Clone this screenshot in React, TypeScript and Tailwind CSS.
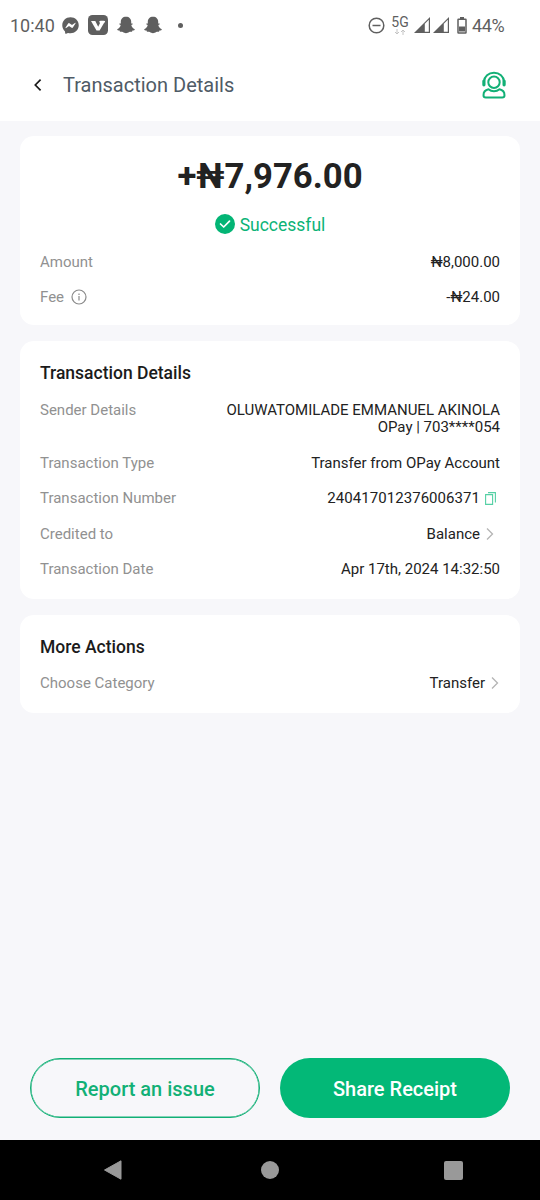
import React from "react";
import { FaFacebookMessenger } from "react-icons/fa";

function Ghost({ className }: { className: string }) {
  return (
    <svg className={className} viewBox="0 0 18 18" fill="currentColor">
      <path d="M9 .8c3.200 0 5.200 2.100 5.200 5v1.700c.6 0 1.300-.2 1.500.3.200.6-.6.900-1.400 1.300.5 2 1.500 3.500 3.500 4.100.2.800-.9 1.200-2.300 1.400-.3.500-.2 1-.6 1.100-.8 0-1.800-.2-2.700.3-1 .7-1.900 1.200-3.200 1.200s-2.200-.5-3.200-1.200c-.9-.5-1.900-.3-2.700-.3-.4-.1-.3-.6-.6-1.100C1.100 14.400 0 14 .2 13.200c2-.6 3-2.100 3.500-4.100-.8-.4-1.600-.7-1.400-1.300.2-.5.9-.3 1.500-.3V5.800c0-2.900 2-5 5.200-5z" />
    </svg>
  );
}

function Signal({ className }: { className: string }) {
  return (
    <svg className={className} viewBox="0 0 16 16">
      <path d="M16 0v16H0z" fill="currentColor" />
      <path d="M10.800 6.800 14.800 2.800v12h-4z" fill="white" />
    </svg>
  );
}

function StatusBar() {
  return (
    <div className="flex h-[50px] shrink-0 items-center justify-between pt-[2px] pr-[35px] pl-[10px] text-[#5f5f5f]">
      <div className="flex items-center">
        <span className="w-[44px] text-[18px] leading-[22px] whitespace-nowrap">10:40</span>
        <FaFacebookMessenger className="relative -top-[1px] ml-[8px] size-[17px]" />
        <svg className="relative -top-[1px] ml-[9px] h-[20px] w-[20px]" viewBox="0 0 20 20">
          <rect width="20" height="20" rx="4.500" fill="currentColor" />
          <path d="M3 6h4.300l2.900 5.800L13 6h4.200l-5.600 9.500H8.500z" fill="white" />
          <path d="M11.200 6.200c1.800-.6 3.500-.4 5.800-.2l-1 2.200c-1.200-.8-2.400-.3-3.800.8z" fill="white" />
        </svg>
        <Ghost className="relative -top-[1px] ml-[9px] size-[18px]" />
        <Ghost className="relative -top-[1px] ml-[9px] size-[18px]" />
        <span className="relative -top-[1px] ml-[16px] size-[5px] rounded-full bg-[#5f5f5f]" />
      </div>
      <div className="flex items-center">
        <svg className="relative -top-[1px] size-[17px]" viewBox="0 0 17 17" fill="none" stroke="currentColor" strokeWidth="1.500">
          <circle cx="8.500" cy="8.500" r="7.300" />
          <path d="M4.500 8.500h8" />
        </svg>
        <div className="ml-[6px] flex h-[21px] w-[18px] flex-col items-center">
          <span className="text-[14px] leading-[13px]">5G</span>
          <svg className="h-[6px] w-[12px]" viewBox="0 0 12 6" fill="none" stroke="#c4c4c4">
            <path d="M3 0v5M1 3l2 2 2-2M9 6V1M7 3l2-2 2 2" />
          </svg>
        </div>
        <Signal className="relative -top-[1px] ml-[5px] h-[16px] w-[16px]" />
        <Signal className="relative -top-[1px] ml-[3px] h-[16px] w-[16px]" />
        <svg className="relative -top-[1px] ml-[8px] h-[17px] w-[10px]" viewBox="0 0 10 17">
          <path d="M3 0h4v2H3z" fill="currentColor" />
          <rect x="1" y="2.200" width="8" height="13.800" rx=".5" fill="none" stroke="currentColor" strokeWidth="1.500" />
          <path d="M2 9.500h6v5H2z" fill="currentColor" />
        </svg>
        <span className="ml-[5px] w-[33px] text-[18px] leading-[22px] tracking-[-0.400px] whitespace-nowrap">44%</span>
      </div>
    </div>
  );
}

function Header() {
  return (
    <header className="flex h-[71px] shrink-0 items-center pr-[33px] pb-[1px] pl-[32px]">
      <svg className="size-[12px]" viewBox="0 0 12 12" fill="none" stroke="#1a1a1a" strokeWidth="1.700">
        <path d="M8.600.7 3.300 6l5.300 5.300" />
      </svg>
      <h1 className="ml-[19px] text-[20px] leading-[24px] text-[#4f5b66]">Transaction Details</h1>
      <svg className="ml-auto h-[28px] w-[26px]" viewBox="0 0 26 28" fill="none" stroke="#12b076" strokeWidth="2" strokeLinejoin="round" strokeLinecap="round">
        <circle cx="13" cy="11.300" r="5.700" />
        <path d="M3 10.500C3.300 5.300 7.500 1.800 13 1.800s9.700 3.500 10 8.700" />
        <path d="M2.900 10v3.800M23.100 10v3.800" strokeWidth="3.200" />
        <path d="M7.500 18.300C4.200 19 2.500 21 2.500 24.200c0 1.500.8 2.300 2.300 2.300h16.400c1.500 0 2.300-.8 2.300-2.300 0-3.200-1.700-5.200-5-5.900-1.500 1.300-3.300 2-5.500 2s-4-.7-5.500-2z" />
      </svg>
    </header>
  );
}

function Row({ label, children }: { label: React.ReactNode; children: React.ReactNode }) {
  return (
    <div className="flex justify-between text-[15px] leading-[17.500px]">
      <span className="flex items-center self-start text-[#919191]">{label}</span>
      <span className="text-right text-[#222222]">{children}</span>
    </div>
  );
}

function Chevron() {
  return (
    <svg className="mb-[1.500px] h-[14px] w-[8px]" viewBox="0 0 8 14" fill="none" stroke="#b4b4b4" strokeWidth="1.300">
      <path d="m1 1.500 5.500 5.500L1 12.500" />
    </svg>
  );
}

export default function App() {
  return (
    <div className="flex h-[1200px] w-[540px] flex-col bg-white font-['Roboto',sans-serif]">
      <StatusBar />
      <Header />
      <main className="flex grow flex-col gap-[15.500px] bg-[#f7f7fa] px-[20px] pt-[15px]">
        <section className="h-[189px] rounded-[14px] bg-white px-[20px] pt-[20px]">
          <div className="text-center text-[34.700px] leading-[40px] font-bold text-[#222222]">+₦7,976.00</div>
          <div className="mt-[16px] flex h-[25px] items-center justify-center gap-[5px] text-[17.500px] text-[#0cb377]">
            <svg className="mb-[1px] size-[20px]" viewBox="0 0 20 20" fill="none">
              <circle cx="10" cy="10" r="10" fill="#03b575" />
              <path d="m5.500 10 3.200 3 5.800-5.800" stroke="white" strokeWidth="1.700" strokeLinecap="round" strokeLinejoin="round" />
            </svg>
            <span className="pt-[1px]">Successful</span>
          </div>
          <div className="mt-[16.500px] flex flex-col gap-[18px]">
            <Row label="Amount">₦8,000.00</Row>
            <Row
              label={
                <>
                  Fee
                  <svg className="mb-[1.500px] ml-[7px] size-[16px]" viewBox="0 0 16 16" fill="none" stroke="#8a8a8a" strokeWidth="1.200">
                    <circle cx="8" cy="8" r="7" />
                    <path d="M8 7v4.500M8 4.500V6" />
                  </svg>
                </>
              }
            >
              -₦24.00
            </Row>
          </div>
        </section>
        <section className="h-[258.500px] rounded-[14px] bg-white px-[20px] pt-[21.500px]">
          <h2 className="text-[17.500px] leading-[22px] font-medium text-[#1b1b1b]">Transaction Details</h2>
          <div className="mt-[17.800px] flex flex-col gap-[18px]">
            <Row label="Sender Details">
              OLUWATOMILADE EMMANUEL AKINOLA
              <br />
              OPay | 703****054
            </Row>
            <Row label="Transaction Type">Transfer from OPay Account</Row>
            <Row label="Transaction Number">
              <span className="flex items-center gap-[5px] pr-[4px] tracking-[0.050px]">
                240417012376006371
                <svg className="mb-[1.500px] h-[13px] w-[11px]" viewBox="0 0 11 13" fill="none" stroke="#55d0a5" strokeWidth="1.100">
                  <path d="M.6 2.600h7v9.800h-7zM3 .6h7.400v9.900" />
                </svg>
              </span>
            </Row>
            <Row label="Credited to">
              <span className="flex items-center gap-[6px] pr-[6px]">
                Balance
                <Chevron />
              </span>
            </Row>
            <Row label="Transaction Date">Apr 17th, 2024 14:32:50</Row>
          </div>
        </section>
        <section className="h-[98px] rounded-[14px] bg-white px-[20px] pt-[21px]">
          <h2 className="mb-[17.500px] text-[17.500px] leading-[22px] font-medium text-[#1b1b1b]">More Actions</h2>
          <Row label="Choose Category">
            <span className="flex items-center gap-[6px] pr-[1px]">
              Transfer
              <Chevron />
            </span>
          </Row>
        </section>
        <div className="mx-[10px] mt-auto mb-[22px] grid h-[60.500px] shrink-0 grid-cols-2 gap-[20px] text-[20px] font-medium">
          <button className="rounded-full border border-[#12b076] pt-[2px] text-[#12b076] ring-[0.500px] ring-[#12b076] ring-inset">Report an issue</button>
          <button className="rounded-full bg-[#03b877] pt-[2px] text-white">Share Receipt</button>
        </div>
      </main>
      <nav className="flex h-[60px] shrink-0 items-center bg-black pl-[103px]">
        <svg className="h-[20px] w-[19px]" viewBox="0 0 19 20">
          <path d="M18 .8v18.400L1.500 10z" fill="#999" stroke="#999" strokeLinejoin="round" />
        </svg>
        <span className="ml-[139px] size-[18px] rounded-full bg-[#999]" />
        <span className="ml-[165px] size-[19px] rounded-[2px] bg-[#999]" />
      </nav>
    </div>
  );
}
